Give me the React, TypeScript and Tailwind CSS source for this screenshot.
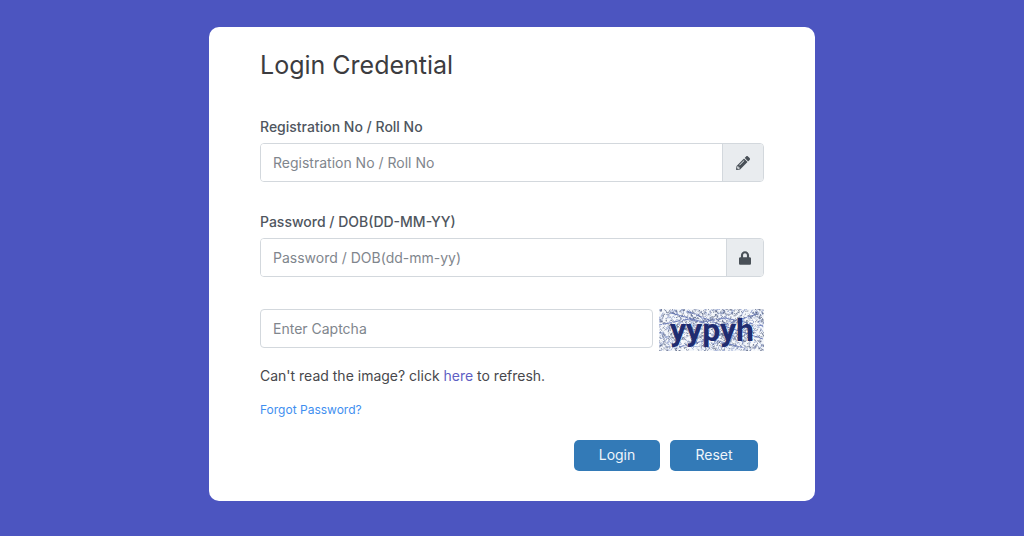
import type { ReactNode } from "react";
import { FaLock, FaPencilAlt } from "react-icons/fa";

function createRandom(seed: number) {
  let state = seed;
  return () => {
    state = (state * 1664525 + 1013904223) % 4294967296;
    return state / 4294967296;
  };
}

function buildNoise(seed: number, count: number, reach: number) {
  const random = createRandom(seed);
  let d = "";
  for (let i = 0; i < count; i++) {
    const x = random() * 105;
    const y = random() * 42;
    const dx = (random() - 0.5) * reach;
    const dy = (random() - 0.5) * reach;
    d += `M${x.toFixed(1)} ${y.toFixed(1)}l${dx.toFixed(1)} ${dy.toFixed(1)}`;
  }
  return d;
}

const darkNoise = buildNoise(7, 900, 4);
const blueNoise = buildNoise(91, 600, 8);
const whiteNoise = buildNoise(33, 240, 6);

function Captcha() {
  return (
    <svg viewBox="0 0 105 42" className="h-[42px] w-[105px] shrink-0" role="img" aria-label="Captcha">
      <rect width="105" height="42" fill="#f4f7fb" />
      <path d={blueNoise} stroke="#9eabd2" strokeWidth="0.9" fill="none" />
      <path d={darkNoise} stroke="#56617f" strokeWidth="0.7" fill="none" />
      <path
        d="M12 4L44 13L66 9L104 17M0 16L30 10L58 18L98 5M20 38L52 30L86 39M28 2L62 16L104 30"
        stroke="#6878b8"
        strokeWidth="0.9"
        fill="none"
      />
      <path d={whiteNoise} stroke="#ffffff" strokeWidth="0.9" fill="none" />
      <text
        x="53"
        y="32"
        textAnchor="middle"
        className="fill-[#1f2c70] font-['Roboto',sans-serif] text-[32px] font-bold"
      >
        yypyh
      </text>
    </svg>
  );
}

type FieldProps = {
  id: string;
  label: string;
  placeholder: string;
  type: string;
  icon: ReactNode;
};

function Field({ id, label, placeholder, type, icon }: FieldProps) {
  return (
    <div>
      <label htmlFor={id} className="mb-1 block text-[14px] leading-6 font-medium text-[#4f5660]">
        {label}
      </label>
      <div className="flex h-[39px] overflow-hidden rounded border border-[#d3d8dd]">
        <input
          id={id}
          type={type}
          placeholder={placeholder}
          className="min-w-0 flex-1 bg-white px-3 text-[14px] text-[#495057] outline-none placeholder:text-[#7f868d]"
        />
        <span className="flex items-center border-l border-[#d3d8dd] bg-[#e9ecef] px-3 text-[#495057]">{icon}</span>
      </div>
    </div>
  );
}

export default function App() {
  return (
    <main className="flex min-h-screen items-start justify-center bg-[#4c55c0] py-[27px] font-['Inter',sans-serif]">
      <form
        className="w-full max-w-[606px] rounded-[10px] bg-white px-[51px] pt-5 pb-[30px]"
        onSubmit={(event) => event.preventDefault()}
      >
        <h1 className="text-[25px] leading-9 text-[#3c3c40]">Login Credential</h1>

        <div className="mt-8 flex flex-col gap-7">
          <Field
            id="registration"
            label="Registration No / Roll No"
            placeholder="Registration No / Roll No"
            type="text"
            icon={<FaPencilAlt className="size-4 p-px" />}
          />
          <Field
            id="password"
            label="Password / DOB(DD-MM-YY)"
            placeholder="Password / DOB(dd-mm-yy)"
            type="password"
            icon={<FaLock className="h-3.5 w-3" />}
          />
        </div>

        <div className="mt-8 flex items-start gap-1.5">
          <input
            type="text"
            aria-label="Enter Captcha"
            placeholder="Enter Captcha"
            className="h-[39px] min-w-0 flex-1 rounded border border-[#d3d8dd] bg-white px-3 text-[14px] text-[#495057] outline-none placeholder:text-[#7f868d]"
          />
          <Captcha />
        </div>

        <p className="mt-[13px] text-[14px] leading-6 text-[#48484c]">
          Can&apos;t read the image? click{" "}
          <a href="#refresh" className="text-[#5f5fc4]">
            here
          </a>{" "}
          to refresh.
        </p>
        <a href="#forgot" className="mt-3 block w-fit text-[12px] leading-5 text-[#3f8ff0]">
          Forgot Password?
        </a>

        <div className="mt-5 flex justify-end gap-2.5 pr-1.5">
          <button type="submit" className="h-[31px] w-[86px] rounded-[5px] bg-[#337ab7] pb-0.5 text-[14px] text-[#eef5fb]">
            Login
          </button>
          <button type="reset" className="h-[31px] w-[88px] rounded-[5px] bg-[#337ab7] pb-0.5 text-[14px] text-[#eef5fb]">
            Reset
          </button>
        </div>
      </form>
    </main>
  );
}
